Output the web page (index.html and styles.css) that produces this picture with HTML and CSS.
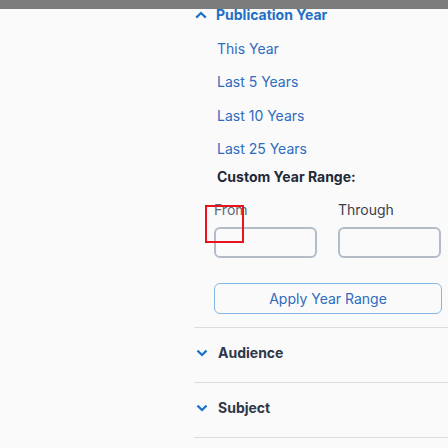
FILE: index.html
```html
<!DOCTYPE html>
<html>
<head>
<meta charset="utf-8">
<link rel="stylesheet" href="styles.css">
</head>
<body>
<div class="topbar"></div>
<div class="sidebar">
  <section class="facet facet-open">
    <button class="facet-head facet-head-active">
      <svg class="chev" width="12" height="8" viewBox="0 0 12 8"><path d="M1.2 6.6 L6 2 L10.8 6.6" fill="none" stroke="currentColor" stroke-width="2.2"/></svg>
      <span>Publication Year</span>
    </button>
    <ul class="options">
      <li><a class="opt">This Year</a></li>
      <li><a class="opt">Last 5 Years</a></li>
      <li><a class="opt">Last 10 Years</a></li>
      <li><a class="opt">Last 25 Years</a></li>
    </ul>
    <div class="custom-title">Custom Year Range:</div>
    <div class="range">
      <label class="lbl lbl-from">From</label>
      <label class="lbl">Through</label>
      <div class="input"></div>
      <div class="input"></div>
    </div>
    <button class="apply">Apply Year Range</button>
  </section>
  <section class="facet">
    <button class="facet-head">
      <svg class="chev" width="12" height="8" viewBox="0 0 12 8"><path d="M1.5 1.6 L6 6 L10.5 1.6" fill="none" stroke="currentColor" stroke-width="2.2"/></svg>
      <span>Audience</span>
    </button>
  </section>
  <section class="facet">
    <button class="facet-head">
      <svg class="chev" width="12" height="8" viewBox="0 0 12 8"><path d="M1.5 1.6 L6 6 L10.5 1.6" fill="none" stroke="currentColor" stroke-width="2.2"/></svg>
      <span>Subject</span>
    </button>
  </section>
</div>
<div class="marker"></div>
</body>
</html>
```
FILE: styles.css
```css
html, body {
  margin: 0;
  padding: 0;
  background: #fafafa;
  font-family: Inter, "Noto Sans", sans-serif;
}
.topbar {
  position: fixed;
  top: 0;
  left: 0;
  right: 0;
  height: 9px;
  background: #7b7b7b;
  z-index: 5;
}
.sidebar {
  margin-left: 194px;
}
.facet {
  border-bottom: 1px solid #dcdcdc;
  padding: 15px 6px 19px 22px;
}
.facet-open {
  padding: 5px 6px 13px 20px;
}
.facet-head {
  display: flex;
  align-items: center;
  gap: 10px;
  margin: 0 0 0 -20px;
  padding: 0;
  border: 0;
  background: none;
  font-family: inherit;
  font-size: 14px;
  font-weight: 700;
  line-height: 20px;
  color: #2d3748;
  cursor: pointer;
}
.facet-head .chev {
  color: #1a73c8;
  flex: none;
}
.facet-open .facet-head {
  margin-left: -19px;
  gap: 9px;
}
.facet-head-active {
  color: #1f6fc5;
}
.options {
  list-style: none;
  margin: 6.5px 0 0 3px;
  padding: 0;
}
.options li {
  height: 33.5px;
  line-height: 33.5px;
  font-size: 14px;
}
.opt {
  color: #2e6cc0;
  cursor: pointer;
}
.custom-title {
  margin: 1px 0 0 3px;
  font-size: 14px;
  font-weight: 700;
  line-height: 20px;
  color: #1f2937;
}
.range {
  display: grid;
  grid-template-columns: 103px 103px;
  column-gap: 21px;
  row-gap: 7.5px;
  margin-top: 13px;
}
.lbl {
  font-size: 14px;
  line-height: 20px;
  color: #3a3f4b;
}
.lbl-from {
  color: #5a6878;
}
.input {
  box-sizing: border-box;
  height: 31px;
  border: 2px solid #b4bcc6;
  border-radius: 6px;
  background: #fafafa;
}
.apply {
  display: block;
  box-sizing: border-box;
  width: 228px;
  height: 31px;
  margin-top: 25px;
  border: 1px solid #86b7e3;
  border-radius: 6px;
  background: #fafafa;
  font-family: inherit;
  font-size: 14px;
  color: #2e6cc0;
  cursor: pointer;
}
.marker {
  position: absolute;
  left: 205px;
  top: 205px;
  width: 39px;
  height: 38px;
  box-sizing: border-box;
  border: 2px solid #e8141c;
}
```
